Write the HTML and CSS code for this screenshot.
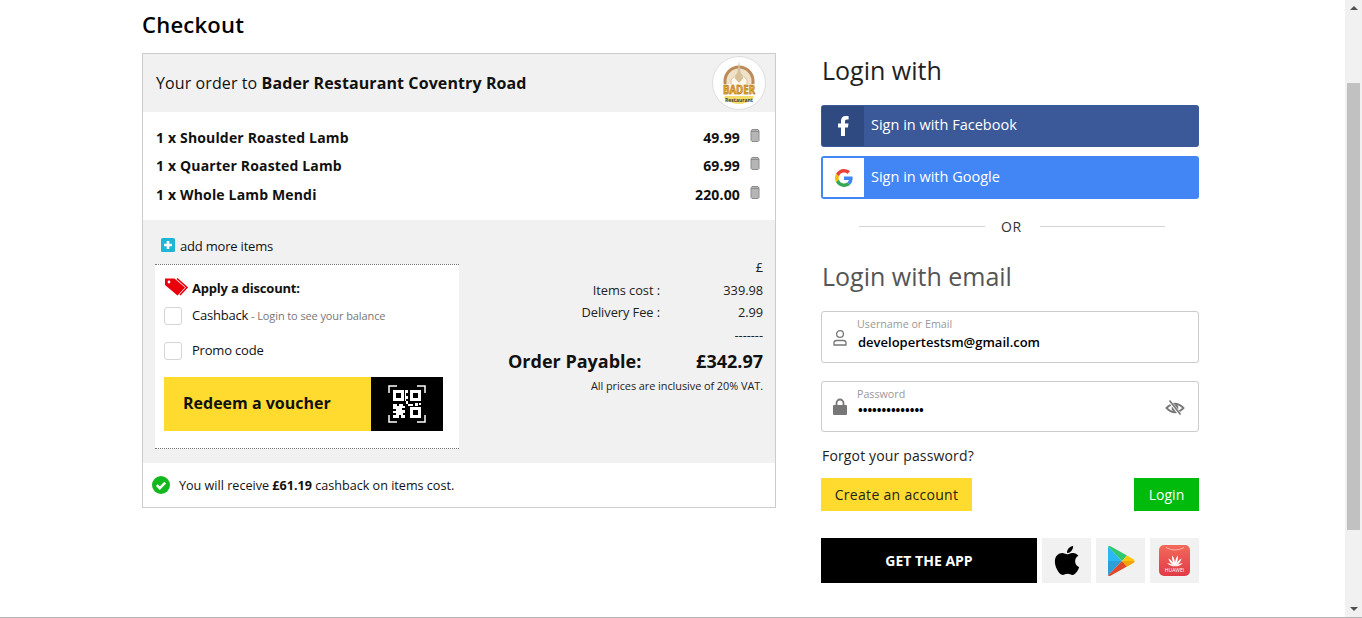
FILE: index.html
```html
<!DOCTYPE html>
<html lang="en">

<head>
    <meta charset="UTF-8" />
    <meta name="viewport" content="width=device-width, initial-scale=1.0" />
    <title>Checkout</title>
    <link rel="stylesheet" href="styles.css">
</head>

<body>
    <div class="page">
        <div class="content">
            <main class="order-col">
                <h1>Checkout</h1>
                <section class="order-card">
                    <header class="order-head">
                        <p>Your order to <b>Bader Restaurant Coventry Road</b></p>
                        <svg class="logo" viewBox="0 0 54 54">
                            <circle cx="27" cy="27" r="26.500" fill="#fff" stroke="#ddd" />
                            <path d="M13 30V25a14 14 0 0 1 28 0v5z" fill="#f0e2c8" stroke="#bd8a5a" stroke-width="3" />
                            <path d="M19 30V24q8-12 16 0v6z" fill="#fdf9f1" stroke="#dcc39c" />
                            <path d="M27 5l1.500 11 3 6-4.500 5-4.500-5 3-6z" fill="#d8c09a" />
                            <path d="M12 42q15 12 30 0l-1-2H13z" fill="#f5dc6a" />
                            <rect x="11" y="28" width="32" height="11" fill="#fbf3d8" />
                            <text x="27" y="38" class="logo-name" text-anchor="middle" textLength="32" lengthAdjust="spacingAndGlyphs">BADER</text>
                            <text x="27" y="46" class="logo-sub" text-anchor="middle">Restaurant</text>
                        </svg>
                    </header>

                    <ul class="items">
                        <li>
                            <span class="item-name">1 x Shoulder Roasted Lamb</span>
                            <span class="item-price">49.99</span>
                            <svg class="trash" viewBox="0 0 10 13"><path d="M2 .5h6l1 1.500v9.500l-1 1H2l-1-1V2z" fill="#b5b5b5" stroke="#8c8c8c" /><path d="M1 2.500h8" stroke="#8c8c8c" /></svg>
                        </li>
                        <li>
                            <span class="item-name">1 x Quarter Roasted Lamb</span>
                            <span class="item-price">69.99</span>
                            <svg class="trash" viewBox="0 0 10 13"><path d="M2 .5h6l1 1.500v9.500l-1 1H2l-1-1V2z" fill="#b5b5b5" stroke="#8c8c8c" /><path d="M1 2.500h8" stroke="#8c8c8c" /></svg>
                        </li>
                        <li>
                            <span class="item-name">1 x Whole Lamb Mendi</span>
                            <span class="item-price">220.00</span>
                            <svg class="trash" viewBox="0 0 10 13"><path d="M2 .5h6l1 1.500v9.500l-1 1H2l-1-1V2z" fill="#b5b5b5" stroke="#8c8c8c" /><path d="M1 2.500h8" stroke="#8c8c8c" /></svg>
                        </li>
                    </ul>

                    <div class="order-body">
                        <div class="add-more">
                            <svg class="plus" viewBox="0 0 14 14"><rect width="14" height="14" rx="1.500" fill="#1fb6d6" /><path d="M7 3v8M3 7h8" stroke="#fff" stroke-width="2.600" /></svg>
                            add more items
                        </div>
                        <div class="order-split">
                            <div class="discount">
                                <div class="discount-title">
                                    <svg class="tag" viewBox="0 0 24 19">
                                        <path d="M1 1.500h9.500L21 10.500l-7.500 8L1 8z" fill="#e8000b" />
                                        <path d="M13 1.500l10 9-7 7.500" fill="none" stroke="#e8000b" stroke-width="1.600" />
                                        <circle cx="5" cy="5" r="1.400" fill="#fff" />
                                    </svg>
                                    <b>Apply a discount:</b>
                                </div>
                                <label class="check-row"><span class="box"></span>Cashback<small> - Login to see your balance</small></label>
                                <label class="check-row"><span class="box"></span>Promo code</label>
                                <div class="voucher">
                                    <span class="voucher-text">Redeem a voucher</span>
                                    <span class="voucher-qr">
                                        <svg viewBox="0 0 38 38" width="38" height="38">
                                            <path d="M1 8V1h8M29 1h8v7M1 30v7h8M29 37h8v-7" fill="none" stroke="#fff" stroke-width="1.500" />
                                            <path d="M5 5h11v11H5zM8 8v5h5V8zM22 5h11v11H22zM25 8v5h5V8zM22 22h11v11H22zM25 25v5h5v-5z" fill="#fff" fill-rule="evenodd" />
                                            <path d="M5 19h4v2h2v-2h4v2h2v2h-3v2h3v3h-2v2h2v3h-4v-3h-2v3H5v-3h3v-2H5v-2h3v-2H5z" fill="#fff" />
                                            <path d="M17 5h3v3h-2v3h2v3h-2v2h2v3h-2v-3h-1zM20 19h5v2h-5zM27 18h3v3h-3zM31 18h2v2h-2z" fill="#fff" />
                                        </svg>
                                    </span>
                                </div>
                            </div>
                            <div class="totals">
                                <div class="total-row currency"><span class="total-value">£</span></div>
                                <div class="total-row"><span>Items cost :</span><span class="total-value">339.98</span></div>
                                <div class="total-row"><span>Delivery Fee :</span><span class="total-value">2.99</span></div>
                                <div class="total-row dashes"><span class="total-value">-------</span></div>
                                <div class="total-pay"><span>Order Payable:</span><span>£342.97</span></div>
                                <p class="vat">All prices are inclusive of 20% VAT.</p>
                            </div>
                        </div>
                    </div>

                    <footer class="cashback-note">
                        <svg class="tick" viewBox="0 0 18 18"><circle cx="9" cy="9" r="9" fill="#13b81f" /><path d="M4.800 9.200l3 3 5.400-5.600" fill="none" stroke="#fff" stroke-width="2.400" /></svg>
                        <span>You will receive <b>£61.19</b> cashback on items cost.</span>
                    </footer>
                </section>
            </main>

            <aside class="login-col">
                <h2>Login with</h2>
                <div class="social fb">
                    <span class="social-icon">
                        <svg viewBox="0 0 24 24" width="24" height="24"><path fill="#fff" d="M14 13.500h2.900l.6-4H14v-2c0-1.030.3-2 2-2h1.600V2.140C17.270 2.100 16.040 2 14.640 2 11.930 2 10 3.660 10 6.700v2.800H7v4h3V22h4z" /></svg>
                    </span>
                    <span class="social-text">Sign in with Facebook</span>
                </div>
                <div class="social google">
                    <span class="social-icon">
                        <svg viewBox="0 0 48 48" width="18" height="18">
                            <path fill="#EA4335" d="M24 9.500c3.540 0 6.710 1.220 9.210 3.600l6.850-6.850C35.900 2.380 30.470 0 24 0 14.620 0 6.510 5.380 2.560 13.220l7.980 6.190C12.430 13.720 17.740 9.500 24 9.500z" />
                            <path fill="#4285F4" d="M46.980 24.550c0-1.570-.15-3.090-.38-4.550H24v9.020h12.940c-.58 2.960-2.260 5.480-4.780 7.180l7.730 6c4.510-4.180 7.090-10.360 7.090-17.650z" />
                            <path fill="#FBBC05" d="M10.530 28.590c-.48-1.450-.76-2.990-.76-4.590s.27-3.140.76-4.590l-7.980-6.190C.92 16.460 0 20.120 0 24c0 3.880.92 7.540 2.560 10.780l7.970-6.190z" />
                            <path fill="#34A853" d="M24 48c6.480 0 11.930-2.130 15.890-5.810l-7.730-6c-2.150 1.450-4.920 2.300-8.160 2.300-6.260 0-11.570-4.220-13.470-9.910l-7.980 6.190C6.510 42.620 14.620 48 24 48z" />
                        </svg>
                    </span>
                    <span class="social-text">Sign in with Google</span>
                </div>
                <div class="or"><span>OR</span></div>
                <h2 class="email-title">Login with email</h2>

                <div class="field">
                    <svg class="field-icon" viewBox="0 0 16 17"><circle cx="8" cy="5" r="3.400" fill="none" stroke="#777" stroke-width="1.300" /><path d="M2 16v-2.200q0-2.300 2.500-2.300h7q2.500 0 2.500 2.300V16z" fill="none" stroke="#777" stroke-width="1.300" /></svg>
                    <div class="field-text">
                        <span class="field-label">Username or Email</span>
                        <span class="field-value">developertestsm@gmail.com</span>
                    </div>
                </div>
                <div class="field">
                    <svg class="field-icon" viewBox="0 0 16 17"><path d="M4.500 8V5a3.500 3.500 0 0 1 7 0v3" fill="none" stroke="#777" stroke-width="1.800" /><rect x="1" y="7" width="14" height="10" rx="1" fill="#777" /></svg>
                    <div class="field-text">
                        <span class="field-label">Password</span>
                        <span class="field-value dots">••••••••••••••</span>
                    </div>
                    <svg class="eye" viewBox="0 0 20 18"><path d="M1.500 9Q10 .5 18.500 9 10 17.500 1.500 9z" fill="none" stroke="#777" stroke-width="1.800" /><circle cx="10" cy="9" r="3.400" fill="#777" /><path d="M4.500 2l11 14" stroke="#fff" stroke-width="3" /><path d="M4.500 1.500l11 14" stroke="#777" stroke-width="1.700" /></svg>
                </div>

                <a class="forgot">Forgot your password?</a>
                <div class="login-actions">
                    <button class="btn btn-create">Create an account</button>
                    <button class="btn btn-login">Login</button>
                </div>

                <div class="app-row">
                    <div class="get-app">GET THE APP</div>
                    <div class="app-tile">
                        <svg viewBox="0 0 384 512" width="28" height="33"><path d="M318.700 268.700c-.2-36.700 16.400-64.400 50-84.800-18.800-26.900-47.200-41.700-84.700-44.600-35.500-2.800-74.300 20.700-88.500 20.700-15 0-49.400-19.700-76.400-19.700C63.300 141.200 4 184.800 4 273.500q0 39.300 14.400 81.200c12.800 36.700 59 126.700 107.200 125.200 25.200-.6 43-17.900 75.800-17.900 31.800 0 48.300 17.900 76.400 17.900 48.600-.7 90.400-82.500 102.600-119.300-65.200-30.700-61.700-90-61.700-91.900zm-56.600-164.200c27.300-32.400 24.800-61.900 24-72.500-24.100 1.400-52 16.400-67.900 34.900-17.500 19.800-27.800 44.300-25.600 71.900 26.100 2 49.900-11.400 69.500-34.300z" /></svg>
                    </div>
                    <div class="app-tile">
                        <svg viewBox="0 0 28 32" width="28" height="32">
                            <path d="M1 1.500L15 16 1 16z" fill="#2ab7f6" />
                            <path d="M1 16h14L1 30.500z" fill="#2d9fd8" />
                            <path d="M1 1.500q.8-1 2.500-.2L20 10.500 15 16z" fill="#31c86f" />
                            <path d="M15 16l5 5.500L3.500 30.700q-1.700.8-2.500-.2z" fill="#df4a2a" />
                            <path d="M20 10.500l6.500 3.800q2 1.700 0 3.400L20 21.500 15 16z" fill="#fdc70c" />
                            <path d="M15 16h12.500q0 1-1 1.700L20 21.500z" fill="#f5a20a" />
                        </svg>
                    </div>
                    <div class="app-tile">
                        <span class="huawei">
                            <svg class="huawei-notch" viewBox="0 0 20 4" width="20" height="4"><path d="M1 .5q9 5 18 0" fill="none" stroke="#f9b0a6" /></svg>
                            <svg viewBox="0 0 20 14" width="18" height="13">
                                <g fill="#fff">
                                    <path transform="rotate(-14 10 13.500)" d="M10 13.500C8.500 10 8.500 4 10 1c1.500 3 1.500 9 0 12.500z" />
                                    <path transform="rotate(14 10 13.500)" d="M10 13.500C8.500 10 8.500 4 10 1c1.500 3 1.500 9 0 12.500z" />
                                    <path transform="rotate(-40 10 13.500)" d="M10 13.500C8.500 10 8.500 5 10 2c1.500 3 1.500 8 0 11.500z" />
                                    <path transform="rotate(40 10 13.500)" d="M10 13.500C8.500 10 8.500 5 10 2c1.500 3 1.500 8 0 11.500z" />
                                    <path transform="rotate(-68 10 13.500)" d="M10 13.500C8.800 11 8.800 7 10 4c1.200 3 1.200 7 0 9.500z" />
                                    <path transform="rotate(68 10 13.500)" d="M10 13.500C8.800 11 8.800 7 10 4c1.200 3 1.200 7 0 9.500z" />
                                </g>
                            </svg>
                            <span class="huawei-name">HUAWEI</span>
                        </span>
                    </div>
                </div>
            </aside>
        </div>

        <div class="scrollbar">
            <span class="arrow up"></span>
            <span class="thumb-track"><span class="thumb"></span></span>
            <span class="arrow down"></span>
        </div>
    </div>
</body>

</html>
```

FILE: styles.css
```css
body,
html {
    margin: 0;
    padding: 0;
    height: 100%;
    overflow: hidden;
    font-family: "Open Sans", "Liberation Sans", sans-serif;
    color: #111;
    background: #fff;
}

.page {
    height: 618px;
    box-sizing: border-box;
    display: flex;
    border-bottom: 1px solid #b4b4b4;
}

.content {
    flex: 1;
    display: flex;
    align-items: flex-start;
    gap: 45px;
    padding-left: 142px;
}

/* left column */

.order-col {
    width: 634px;
}

h1 {
    margin: 0;
    height: 53px;
    box-sizing: border-box;
    padding-top: 9px;
    font-size: 22px;
    line-height: 30px;
    font-weight: 600;
    letter-spacing: 0.25px;
    color: #000;
}

.order-card {
    border: 1px solid #ccc;
    height: 455px;
    box-sizing: border-box;
}

.order-head {
    height: 58px;
    background: #f1f1f1;
    display: flex;
    align-items: center;
    justify-content: space-between;
    padding: 0 9px 0 13px;
}

.order-head p {
    margin: 0;
    font-size: 16px;
    letter-spacing: 0.1px;
}

.logo {
    width: 54px;
    height: 54px;
}

.logo-name {
    font-size: 12px;
    font-weight: 700;
    fill: #e6b422;
    stroke: #a5532a;
    stroke-width: 0.5px;
}

.logo-sub {
    font-size: 5px;
    font-weight: 700;
    fill: #3a3a3a;
}

.items {
    list-style: none;
    margin: 0;
    padding: 11px 15px 0 13px;
    height: 108px;
    box-sizing: border-box;
}

.items li {
    display: flex;
    align-items: center;
    height: 28.500px;
    font-size: 14px;
    font-weight: 700;
    letter-spacing: 0.16px;
}

.item-name {
    flex: 1;
}

.trash {
    width: 10px;
    height: 13px;
    margin: -4px 0 0 10px;
}

.order-body {
    height: 243px;
    box-sizing: border-box;
    background: #f1f1f1;
    padding-top: 16px;
}

.add-more {
    display: flex;
    align-items: center;
    gap: 5px;
    padding-left: 18px;
    height: 19px;
    font-size: 13px;
    letter-spacing: -0.2px;
}

.plus {
    width: 14px;
    height: 14px;
    margin-top: -2px;
}

.order-split {
    display: flex;
    margin-top: 9px;
    padding: 0 12px;
}

.discount {
    width: 304px;
    height: 185px;
    box-sizing: border-box;
    background: #fff;
    border-top: 1px dotted #777;
    border-bottom: 1px dotted #777;
    padding: 13px 9px 0;
    font-size: 13px;
    letter-spacing: -0.2px;
}

.discount-title {
    display: flex;
    align-items: center;
    gap: 4px;
    height: 20px;
    margin-bottom: 8px;
}

.tag {
    width: 24px;
    height: 19px;
    margin-top: -4px;
}

.check-row {
    display: flex;
    align-items: center;
    height: 18px;
    margin-bottom: 17px;
}

.box {
    width: 18px;
    height: 18px;
    box-sizing: border-box;
    border: 1px solid #d5d5d5;
    border-radius: 3px;
    margin: 2px 10px 0 0;
}

.check-row small {
    font-size: 11px;
    color: #777;
    white-space: pre;
    margin-top: 1px;
    letter-spacing: -0.1px;
}

.voucher {
    display: flex;
    height: 54px;
    width: 279px;
    margin-top: 18px;
}

.voucher-text {
    flex: 1;
    background: #ffdb2f;
    font-size: 16px;
    font-weight: 700;
    line-height: 52px;
    padding-left: 19px;
    letter-spacing: 0;
}

.voucher-qr {
    width: 72px;
    background: #000;
    display: flex;
    align-items: center;
    justify-content: center;
}

.totals {
    flex: 1;
    font-size: 12.800px;
    letter-spacing: -0.05px;
    color: #222;
}

.total-row {
    display: flex;
    justify-content: flex-end;
    height: 22px;
    line-height: 22px;
}

.total-value {
    width: 103px;
    text-align: right;
}

.currency {
    height: 17px;
    line-height: 10px;
    margin-top: -2px;
}

.dashes {
    margin-top: 1px;
}

.total-pay {
    display: flex;
    justify-content: space-between;
    padding-left: 49px;
    margin-top: 1.500px;
    font-size: 18px;
    font-weight: 700;
    line-height: 26px;
    letter-spacing: 0;
    color: #111;
}

.vat {
    margin: 5px 0 0;
    text-align: right;
    font-size: 10.900px;
    line-height: 14px;
}

.cashback-note {
    display: flex;
    align-items: center;
    gap: 9px;
    height: 44px;
    padding-left: 9px;
    font-size: 12.600px;
}

.tick {
    width: 18px;
    height: 18px;
}

/* right column */

.login-col {
    width: 378px;
    padding-top: 52px;
}

h2 {
    margin: 0 0 0 1px;
    font-size: 25px;
    font-weight: 400;
    line-height: 36px;
    height: 53px;
    color: #222;
}

.social {
    display: flex;
    align-items: center;
    height: 42px;
    border-radius: 3px;
    box-sizing: border-box;
    color: #fff;
    font-size: 14.500px;
    gap: 7px;
    margin-bottom: 9px;
}

.social-icon {
    width: 43px;
    height: 40px;
    display: flex;
    align-items: center;
    justify-content: center;
}

.fb {
    background: #3b5998;
}

.fb .social-text {
    padding-bottom: 4px;
}

.fb .social-icon {
    background: #2f4a80;
    margin-left: 1px;
    width: 42px;
}

.google {
    background: #4285f4;
    height: 43px;
}

.google .social-text {
    padding-bottom: 2px;
}

.google .social-icon {
    background: #fff;
    margin-left: 2px;
    height: 39px;
    width: 41px;
}

.or {
    display: flex;
    align-items: center;
    gap: 16px;
    height: 36px;
    padding: 0 34px 0 38px;
    margin-top: 1px;
    font-size: 14px;
    letter-spacing: 0.5px;
    color: #333;
}

.or span {
    margin-right: 2px;
}

.or::before,
.or::after {
    content: "";
    height: 1px;
    background: #d4d4d4;
}

.or::before {
    width: 126px;
}

.or::after {
    flex: 1;
}

.email-title {
    margin-top: 14px;
    color: #555;
}

.field {
    display: flex;
    align-items: center;
    height: 52px;
    box-sizing: border-box;
    border: 1px solid #ccc;
    border-radius: 3px;
    padding: 0 13px 0 10px;
    margin-bottom: 18px;
}

.field+.field {
    height: 51px;
}

.field-icon {
    width: 16px;
    height: 17px;
}

.field-text {
    flex: 1;
    display: flex;
    flex-direction: column;
    padding-left: 9px;
    margin-top: -5px;
}

.field-label {
    font-size: 10.700px;
    line-height: 15px;
    color: #999;
}

.field-value {
    font-size: 13px;
    font-weight: 600;
    line-height: 20px;
    padding-left: 1px;
    color: #000;
}

.dots {
    font-size: 12.500px;
    font-weight: 700;
    margin: -1px 0 1px;
}

.eye {
    width: 20px;
    height: 18px;
    margin-top: 2px;
}

.forgot {
    display: block;
    margin: -7px 0 0 1px;
    height: 26px;
    line-height: 26px;
    font-size: 14px;
    letter-spacing: 0.15px;
    color: #222;
}

.login-actions {
    display: flex;
    justify-content: space-between;
    margin-top: 9px;
}

.btn {
    height: 33px;
    border: none;
    font-family: inherit;
    font-size: 14px;
    padding: 0;
}

.btn-create {
    width: 151px;
    background: #ffdb2f;
    color: #222;
    letter-spacing: 0.3px;
}

.btn-login {
    width: 65px;
    background: #00bb0c;
    color: #fff;
}

.app-row {
    display: flex;
    gap: 5px;
    margin-top: 27px;
}

.get-app {
    width: 216px;
    height: 45px;
    background: #000;
    color: #fff;
    font-size: 14px;
    font-weight: 700;
    line-height: 45px;
    text-align: center;
}

.app-tile {
    width: 49px;
    height: 45px;
    background: #f1f1f1;
    display: flex;
    align-items: center;
    justify-content: center;
}

.huawei {
    width: 31px;
    height: 31px;
    border-radius: 5px;
    background: linear-gradient(#f26a5a, #e23a47);
    display: flex;
    flex-direction: column;
    align-items: center;
    justify-content: flex-end;
    padding-bottom: 3px;
    box-sizing: border-box;
}

.huawei-notch {
    margin-bottom: 3px;
}

.huawei-name {
    font-size: 5px;
    line-height: 6px;
    color: #fff;
}

/* window scrollbar */

.scrollbar {
    width: 17px;
    background: #f1f1f1;
    display: flex;
    flex-direction: column;
    align-items: center;
}

.arrow {
    width: 0;
    height: 0;
    border-left: 4px solid transparent;
    border-right: 4px solid transparent;
}

.arrow.up {
    margin-top: 6px;
    border-bottom: 4px solid #505050;
}

.arrow.down {
    margin-bottom: 6px;
    border-top: 4px solid #505050;
}

.thumb-track {
    flex: 1;
    align-self: stretch;
    display: flex;
    justify-content: center;
    padding-top: 73px;
}

.thumb {
    width: 13px;
    height: 447px;
    background: #c1c1c1;
}
```
